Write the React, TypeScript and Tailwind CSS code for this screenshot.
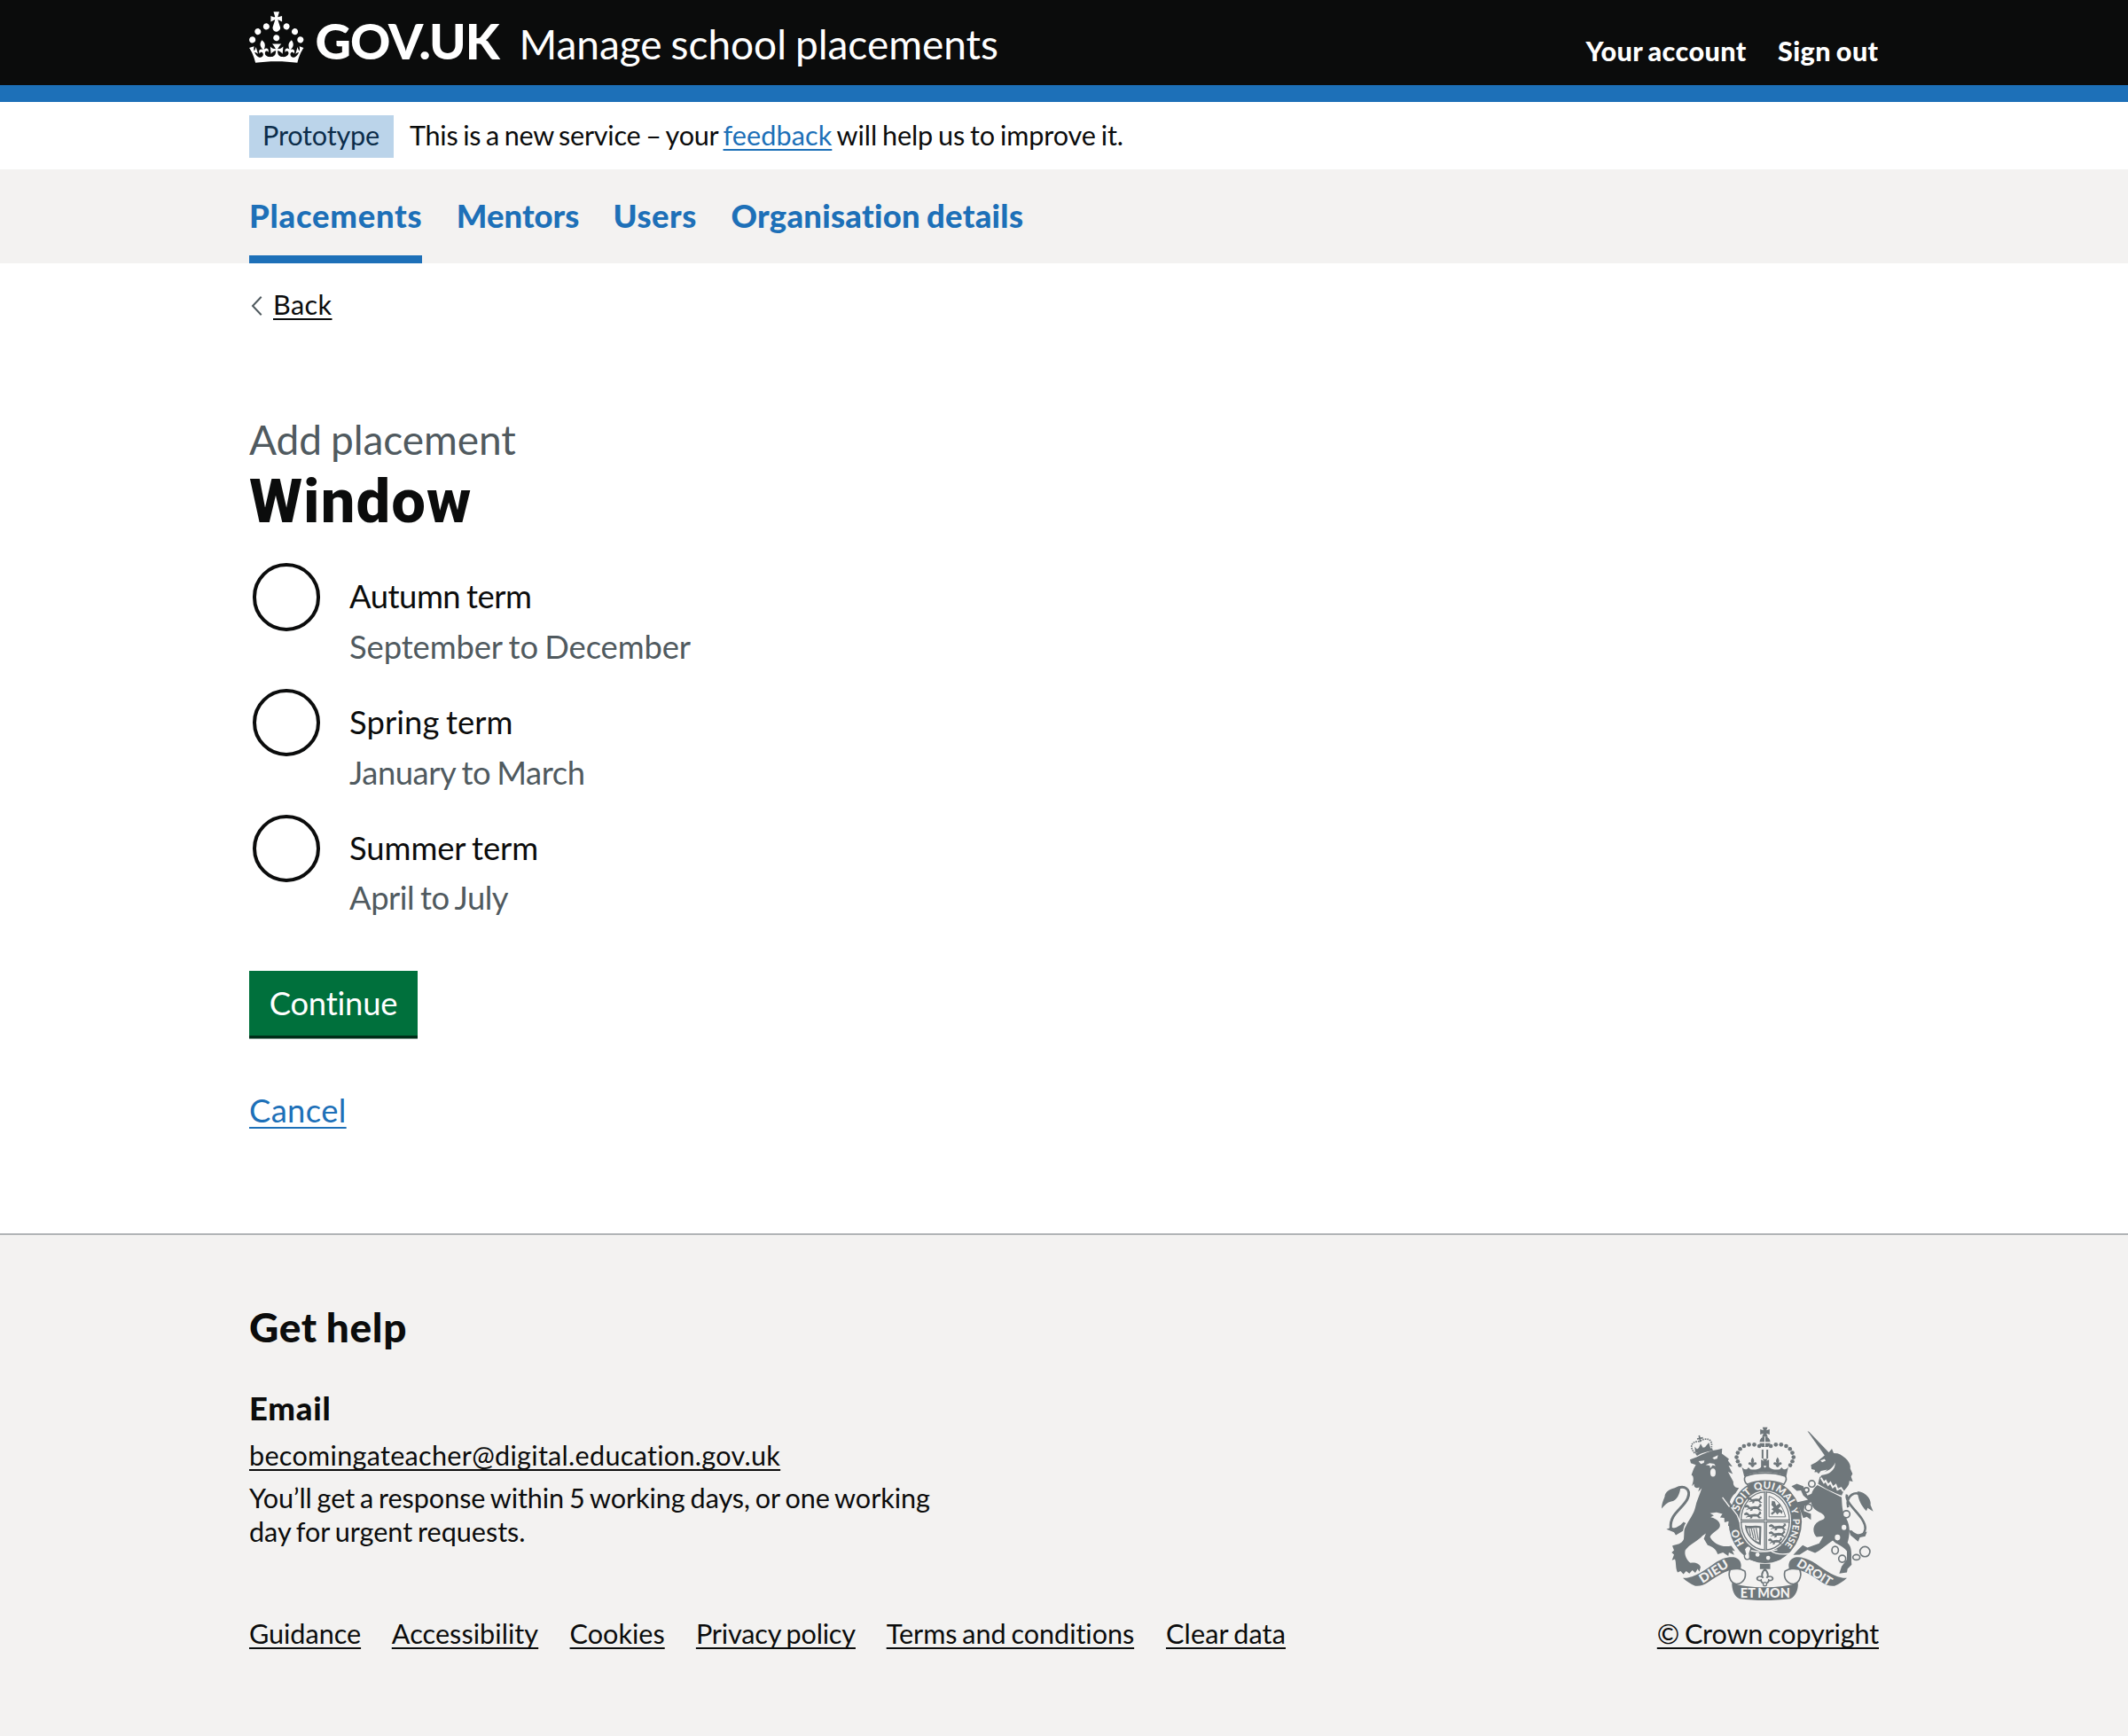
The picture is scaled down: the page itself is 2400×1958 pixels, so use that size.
import React from "react";

function Crown() {
  return (
    <svg viewBox="0 0 32 30" className="h-[58px] w-[61.5px] shrink-0" fill="currentColor" aria-hidden="true">
      <path d="M22.6 10.4c-1 .4-2-.1-2.4-1-.4-.9.1-2 1-2.4.9-.4 2 .1 2.4 1s-.1 2-1 2.4m-5.9 6.7c-.9.4-2-.1-2.4-1-.4-.9.1-2 1-2.4.9-.4 2 .1 2.4 1s-.1 2-1 2.4m10.8-3.7c-1 .4-2-.1-2.4-1-.4-.9.1-2 1-2.4.9-.4 2 .1 2.4 1s0 2-1 2.4m3.3 4.8c-1 .4-2-.1-2.4-1-.4-.9.1-2 1-2.4.9-.4 2 .1 2.4 1s-.1 2-1 2.4M17 4.7l2.3 1.2V2.5l-2.3.7-.2-.2.9-3h-3.4l.9 3-.2.2c-.1.1-2.3-.7-2.3-.7v3.4L15 4.7c.1.1.1.2.2.2l-1.3 4c-.1.2-.1.4-.1.6 0 1.1.8 2 1.9 2.2h.7c1-.2 1.9-1.1 1.9-2.1 0-.2 0-.4-.1-.6l-1.3-4c-.1-.2 0-.2.1-.3m-7.6 5.7c.9.4 2-.1 2.4-1 .4-.9-.1-2-1-2.4-.9-.4-2 .1-2.4 1s0 2 1 2.4m-5 3c.9.4 2-.1 2.4-1 .4-.9-.1-2-1-2.4-.9-.4-2 .1-2.4 1s.1 2 1 2.4m-3.2 4.8c.9.4 2-.1 2.4-1 .4-.9-.1-2-1-2.4-.9-.4-2 .1-2.4 1s0 2 1 2.4m14.8 11c4.4 0 8.6.3 12.3.8 1.1-4.5 2.4-7 3.7-8.8l-2.5-.9c.2 1.3.3 1.9 0 2.7-.4-.4-.8-1.1-1.1-2.3l-1.2 4c.7-.5 1.3-.8 2-.9-1.1 2.5-2.6 3.1-3.5 3-1.1-.2-1.7-1.2-1.5-2.1.3-1.2 1.5-1.5 2.1-.1 1.1-2.3-.8-3-2-2.3 1.9-1.9 2.1-3.5.6-5.6-2.1 1.6-2.1 3.2-1.2 5.5-1.2-1.4-3.2-.6-2.5 1.6.9-1.4 2.1-.5 1.9.8-.2 1.1-1.7 2.1-3.5 1.9-2.7-.2-2.9-2.1-2.9-3.6.7-.1 1.9.5 2.9 1.9l.4-4.3c-1.1 1.1-2.1 1.4-3.2 1.4.4-1.2 2.1-3 2.1-3h-5.4s1.7 1.9 2.1 3c-1.1 0-2.1-.2-3.2-1.4l.4 4.3c1-1.4 2.2-2 2.9-1.9-.1 1.5-.2 3.4-2.9 3.6-1.9.2-3.4-.8-3.5-1.9-.2-1.3 1-2.2 1.9-.8.7-2.3-1.2-3-2.5-1.6.9-2.2.9-3.9-1.2-5.5-1.5 2-1.3 3.7.6 5.6-1.2-.7-3.1 0-2 2.3.6-1.4 1.8-1.1 2.1.1.2.9-.3 1.9-1.5 2.1-.9.2-2.4-.5-3.5-3 .6 0 1.2.3 2 .9l-1.2-4c-.3 1.1-.7 1.9-1.1 2.3-.3-.8-.2-1.4 0-2.7l-2.9.9C1.3 23 2.6 25.5 3.7 30c3.7-.5 7.9-.8 12.3-.8" />
    </svg>
  );
}

const INK = "#6f777b";
const PAPER = "#f3f2f1";

const archPearls = [
  [403, 122],
  [386, 117],
  [368, 117],
  [351, 122],
  [338, 132],
  [330, 145],
  [326, 160],
  [330, 174],
  [337, 187],
];

/* A lion passant, about 66 units wide. */
const passant =
  "M2 6l8-4 6 3 4 4 16-2 10 1 6-6-4-2 8 0 2 6-8 6 4 4 6 3-10 1-6-5-14 0-2 5-8 1 3-5-9 0-6 3 2-4 6-2-6-3-6 1z";

/* A fleur-de-lis, centred on x = 0, standing on y = 0. */
const fleur = "M0-34c6 8 7 14 3 20 4-5 10-4 11 1 0 4-4 6-7 4 0 4-3 7-7 9-4-2-7-5-7-9-3 2-7 0-7-4 1-5 7-6 11-1-4-6-3-12 3-20z";

function RoyalArms() {
  return (
    <svg viewBox="70 56 722 592" className="h-[197px] w-[241px]" fill={INK} aria-hidden="true">
      {/* lion */}
      <path d="M168 168L190 160C215 146 240 137 262 134L277 130L276 148L292 160L300 166L297 172L312 192L299 188L313 217L297 209L315 243C314 256 320 264 334 264L322 282C312 290 306 300 303 312L326 345Q340 364 333 398L322 388L318 402L309 388L297 393L301 376L285 380L290 366L270 364L278 352L258 347L236 350L249 357L238 363C262 368 275 385 268 398C258 412 240 418 236 430C245 450 275 468 308 460L321 478L311 475L318 491L300 483L298 495L280 483L262 489C255 467 240 462 228 458L215 436L222 418L210 426C200 440 165 455 152 475C148 492 158 510 170 518C185 515 200 520 204 532L200 548L194 538L186 552L176 543L166 554L155 546L146 556L136 546L126 550C118 535 122 515 117 505L107 509L114 490L106 483L114 475L108 460C125 455 140 455 147 438C149 420 147 405 152 398C165 370 180 355 186 330C190 310 200 290 208 265L196 277L200 262C186 268 180 260 182 250L174 258C181 240 182 225 173 220L181 198L188 186L171 180Z" />
      <g fill={PAPER}>
        <path d="M197 173l20-2-2 8-10 4zM244 162l19-9-3 12-10 2zM221 186l14-6 15 2 5 8-10-3-8 10-2-9z" />
        <ellipse cx="246" cy="212" rx="9" ry="14" />
      </g>
      <g fill="none" stroke={INK}>
        <path d="M118 268C150 252 173 268 160 300C145 334 98 352 103 400" strokeWidth="9" />
        <path d="M98 400C112 410 134 402 150 382" strokeWidth="9" />
      </g>
      <path d="M72 334C72 310 84 296 83 288C88 274 108 262 136 262C134 284 124 308 104 310C92 312 82 322 72 334ZM88 404L106 398C122 408 136 396 152 380L144 410L120 424L114 414Z" />
      {/* lion's crown */}
      <path d="M186 148C202 138 222 130 243 129L246 138C226 140 206 146 192 155Z" />
      <g fill="none" stroke={INK} strokeWidth="5">
        <path d="M184 146C165 124 172 106 200 106C222 92 246 96 241 126" strokeDasharray="5 3" />
        <path d="M199 86L204 108M192 98L212 94" />
      </g>
      <path d="M186 146L184 124L192 133L198 128L204 114L212 127L219 126L232 110L238 130Z" />

      {/* unicorn */}
      <path d="M566 71L572 74L641 146L626 156Z" />
      <path d="M578 186C600 178 614 160 630 150L640 142L649 131L655 146L668 147C694 156 716 182 711 198L719 216L714 226L720 242L708 240C708 258 698 262 692 272L672 262C650 262 622 244 610 226L620 214L634 202L612 206L604 216L598 210L590 211L592 203L580 200Z" />
      <path d="M610 171l14-5 4 6-12 5zM606 212C634 212 654 196 660 178C662 206 634 222 612 220Z" fill={PAPER} />
      <path d="M608 226C630 246 662 260 692 268L682 290C654 280 622 264 602 250Z" />
      <path d="M612 230L622 246L628 240L636 254L644 246L652 262L662 254L668 270L680 264L688 276" fill="none" stroke={PAPER} strokeWidth="6" />
      <path d="M600 254L682 296C684 320 682 345 698 368C714 396 708 430 702 450C722 470 712 496 716 524L702 538L700 550L674 554L682 530L700 506L700 478C684 458 664 456 652 442C636 452 610 476 592 484L566 474L540 490L518 491L534 474L550 458L566 466L606 452L620 428L597 430C580 412 584 384 612 374C636 366 620 352 606 346C592 338 582 330 578 312L556 326L554 342L578 352L578 372L564 362L552 366L538 330L526 314L568 304L552 290L544 272L530 274L512 258L530 250L552 258L566 290L580 284C584 270 592 260 600 254Z" />
      <path d="M700 286C690 320 764 360 762 402C758 434 732 430 712 410M704 330C694 290 730 268 756 294" fill="none" stroke={INK} strokeWidth="8" />
      <path d="M735 276C760 276 784 300 780 322L789 344L770 332L766 342C746 322 738 300 735 276ZM706 404L730 424L768 412L762 428L744 432L738 446L712 424Z" />
      <g fill={PAPER}>
        <ellipse cx="690" cy="398" rx="8" ry="9" />
        <ellipse cx="668" cy="432" rx="9" ry="10" />
      </g>
      <g fill={PAPER} stroke={INK} strokeWidth="5">
        <circle cx="581" cy="250" r="11" />
        <circle cx="563" cy="271" r="8" />
        <circle cx="570" cy="330" r="11" />
        <circle cx="698" cy="353" r="12" />
        <ellipse cx="660" cy="475" rx="11" ry="13" />
        <circle cx="684" cy="504" r="12" />
        <ellipse cx="732" cy="499" rx="12" ry="9" />
        <circle cx="761" cy="480" r="17" />
      </g>

      {/* crown */}
      <path d="M414 58h17l-4 11 11-4v18l-11-4 5 12h-20l5-12-11 4V65l11 4z" />
      <path d="M404 108a18 18 0 0 1 36 0z" />
      <path d="M403 112h38l-8 13h-22zM411 134h6v30h-6zM427 134h6v30h-6z" />
      <path d="M422 90v34" stroke={PAPER} strokeWidth="3" />
      {archPearls.map(([x, y]) => (
        <React.Fragment key={x + "-" + y}>
          <circle cx={x} cy={y} r="7" />
          <circle cx={845 - x} cy={y} r="7" />
        </React.Fragment>
      ))}
      <path d="M343 190C348 204 362 204 366 194L373 201C392 204 410 200 412 186L422 196L433 186C436 200 452 204 472 201L479 194C484 204 497 204 502 190L494 226C465 206 380 206 352 226Z" />
      <path d={fleur} transform="translate(380 194)" />
      <path d={fleur} transform="translate(465 194)" />
      <path d="M409 168l13 7 14-7v26l-14-6-13 6z" />
      <path d="M414 166h17l-8 14z" />

      {/* garter */}
      <ellipse cx="423" cy="378" rx="124" ry="141" />
      <ellipse cx="423" cy="376" rx="88" ry="104" fill={PAPER} />
      <ellipse cx="423" cy="376" rx="82" ry="98" fill="none" stroke={INK} strokeWidth="4" />
      <path d="M424 276V474M340 376H506" stroke={INK} strokeWidth="10" />
      <path d="M424 276V474M340 376H506" stroke={PAPER} strokeWidth="2" />
      {[292, 318, 344].map((y, i) => (
        <path key={y} d={passant} transform={`translate(${[360, 350, 349][i]} ${y}) scale(${[0.9, 1.05, 1.05][i]} 1.15)`} />
      ))}
      {[384, 408, 432].map((y, i) => (
        <path key={y} d={passant} transform={`translate(${[433, 433, 431][i]} ${y}) scale(${[1.05, 1.0, 0.85][i]} 1.15)`} />
      ))}
      <path d="M436 292C460 300 482 322 492 362H436Z" fill="none" stroke={INK} strokeWidth="3" />
      <path d="M446 308l10 2 4 14 12-8 4 10-8 8 14 8-2 10-8-6-8 8-6-8-12 10-4-6 10-8-8-6 8-6-8-8z" />
      <path d="M354 390C370 396 388 388 410 394L408 458C384 450 356 424 354 390Z" />
      <path d="M362 400C364 424 384 442 402 448L403 400C388 398 376 404 362 400Z" fill={PAPER} />
      <path d="M368 402L374 426M376 402L384 436M384 402L392 442M392 400L400 440" stroke={INK} strokeWidth="3.5" />
      {/* strap and buckle */}
      <path d="M346 462C372 486 410 486 440 478C462 470 484 462 500 474L476 506C440 520 396 520 358 502Z" />
      <path d="M372 476C410 486 440 478 464 474M440 476C462 492 486 490 506 486" fill="none" stroke={PAPER} strokeWidth="4" />
      <path d="M354 470C364 452 380 464 372 478C364 492 378 500 366 506C352 508 348 492 358 486" fill={PAPER} stroke={INK} strokeWidth="4" />
      <g fill={PAPER}>
        <circle cx="397" cy="490" r="7" />
        <circle cx="433" cy="501" r="7" />
      </g>
      {/* foreleg over the garter */}
      <path d="M280 300L300 318L322 350Q336 368 333 398L322 388L318 402L309 388L297 393L301 376L285 380Z" />
      <path d="M278 296L302 328M308 330L328 356L337 380" fill="none" stroke={PAPER} strokeWidth="4" />
      <path d="M356 224C395 210 450 210 491 224C498 232 492 244 486 252C450 236 396 236 362 252C352 244 350 232 356 224Z" fill={PAPER} stroke={INK} strokeWidth="5" />
      <path id="garter-line" d="M423 489A94 111 0 0 1 423 267A94 111 0 0 1 423 489" fill="none" />
      <g fill={PAPER} fontFamily="Lato, sans-serif" fontWeight="900" fontSize="35" textAnchor="middle">
        <text><textPath href="#garter-line" startOffset="17%">HO</textPath></text>
        <text><textPath href="#garter-line" startOffset="36.5%">SOIT</textPath></text>
        <text><textPath href="#garter-line" startOffset="49.5%">QUI</textPath></text>
        <text><textPath href="#garter-line" startOffset="61%">MAL</textPath></text>
        <text fontSize="30"><textPath href="#garter-line" startOffset="69.7%">Y</textPath></text>
        <text fontSize="31"><textPath href="#garter-line" startOffset="81%">PENSE</textPath></text>
      </g>

      {/* motto ribbon */}
      <path d="M144 569C180 572 216 544 248 522C276 502 300 496 322 500C340 506 346 526 338 542C300 534 262 562 232 582C214 594 200 598 186 596C170 590 156 580 144 569Z" />
      <path d="M700 569C664 572 628 544 596 522C568 502 544 496 522 500C504 506 498 526 506 542C544 534 582 562 612 582C630 594 644 598 658 596C674 590 688 580 700 569Z" />
      <path d="M310 586C360 606 480 606 534 586C536 610 524 634 508 640C450 647 390 647 336 640C318 632 310 610 310 586Z" />
      <g fill="none" stroke={INK} strokeWidth="5">
        <path d="M306 538C296 552 300 586 326 590C350 588 360 566 354 546L338 538" />
        <path d="M538 538C548 552 544 586 518 590C494 588 484 566 490 546L506 538" />
      </g>
      <g fill={PAPER} fontFamily="Lato, sans-serif" fontWeight="900" textAnchor="middle">
        <text x="423" y="636" fontSize="45" textLength="168" lengthAdjust="spacingAndGlyphs">ET MON</text>
        <text transform="translate(256 559) rotate(-32)" fontSize="42" textLength="108" lengthAdjust="spacingAndGlyphs">DIEU</text>
        <text transform="translate(583 562) rotate(32)" fontSize="41" textLength="132" lengthAdjust="spacingAndGlyphs">DROIT</text>
      </g>
      {/* pendant */}
      <path d="M405 521h35v18h-35z" />
      <path d={fleur} transform="translate(422 590) scale(1.9 1.5)" fill={PAPER} stroke={INK} strokeWidth="3" />
      <circle cx="422" cy="590" r="6" fill={PAPER} stroke={INK} strokeWidth="4" />
    </svg>
  );
}

const LINK = "underline [text-decoration-skip-ink:none] decoration-2 underline-offset-[4px]";

const nav = [
  { label: "Placements", cls: "w-[195px] tracking-[0.75px] border-[#1d70b8]" },
  { label: "Mentors", cls: "w-[138px] tracking-[0.05px] border-transparent" },
  { label: "Users", cls: "w-[94px] tracking-[0.47px] border-transparent" },
  { label: "Organisation details", cls: "w-[330px] tracking-[0.28px] border-transparent" },
];

const terms = [
  { label: "Autumn term", cls: "tracking-[-0.5px]", hint: "September to December", hintCls: "tracking-[-0.12px]" },
  { label: "Spring term", cls: "tracking-[0.06px]", hint: "January to March", hintCls: "tracking-[-0.45px]" },
  { label: "Summer term", cls: "tracking-[-0.1px]", hint: "April to July", hintCls: "tracking-[-0.5px]" },
];

const footerLinks = [
  { label: "Guidance", cls: "w-[125.5px] tracking-[-0.04px]" },
  { label: "Accessibility", cls: "w-[165.5px] tracking-[0.05px]" },
  { label: "Cookies", cls: "w-[107px]" },
  { label: "Privacy policy", cls: "w-[179.5px] tracking-[-0.16px]" },
  { label: "Terms and conditions", cls: "w-[280px] tracking-[-0.06px]" },
  { label: "Clear data", cls: "w-[136px] tracking-[0.12px]" },
];

const WRAP = "mx-auto w-[1838px]";

export default function App() {
  return (
    <div className="flex h-[1958px] flex-col bg-white font-['Lato',sans-serif] text-[30.6px] leading-[38px] whitespace-nowrap text-[#0b0c0c] [word-spacing:-0.06em]">
      <header className="h-[115px] shrink-0 border-b-[19px] border-[#1d70b8] bg-[#0b0c0c] text-white">
        <div className={`${WRAP} flex items-start`}>
          <div className="pt-[13px]">
            <Crown />
          </div>
          <span className="mt-[10px] ml-[13px] w-[230px] text-[56px] leading-[71px] font-black tracking-[-1px]">GOV.UK</span>
          <span className="mt-[21px] text-[46px] leading-[58px] tracking-[-0.02px]">Manage school placements</span>
          <nav className="mt-[39px] ml-auto flex gap-[34.5px] font-black">
            <a className="w-[182px] tracking-[0.4px]">Your account</a>
            <a className="w-[114px] tracking-[0.4px]">Sign out</a>
          </nav>
        </div>
      </header>

      <div className={`${WRAP} flex h-[76px] shrink-0 items-start pt-[15px]`}>
        <strong className="h-[48px] w-[162.5px] bg-[#bbd4ea] pl-[15px] leading-[46px] font-normal tracking-[-0.18px] text-[#0c2d4a]">Prototype</strong>
        <p className="ml-[18.5px] leading-[46px]">
          <span className="tracking-[-0.26px]">This is a new service – your </span>
          <a className={`${LINK} tracking-[0.08px] text-[#1d70b8]`}>feedback</a>
          <span className="tracking-[-0.1px]"> will help us to improve it.</span>
        </p>
      </div>

      <div className="h-[105.5px] shrink-0 bg-[#f3f2f1]">
        <nav className={`${WRAP} flex h-full gap-[38.8px] text-[36.4px] leading-[48px] font-black text-[#1d70b8]`}>
          {nav.map((n) => (
            <a key={n.label} className={`${n.cls} border-b-[9.5px] pt-[28px]`}>
              {n.label}
            </a>
          ))}
        </nav>
      </div>

      <main className={`${WRAP} h-[1094.5px] shrink-0`}>
        <div className="flex items-start gap-[11px] pt-[28.5px]">
          <svg viewBox="0 0 16 24" className="mt-[8px] h-[24px] w-[16px]" fill="none" stroke="#505a5f" strokeWidth="2">
            <path d="M13.7 1.7L4 12L13.7 22.3" />
          </svg>
          <a className={`${LINK} tracking-[0.4px]`}>Back</a>
        </div>
        <h1 className="mt-[103px] font-['Roboto',sans-serif] text-[68.9px] leading-[72px] font-extrabold tracking-[1px]">
          <span className="mb-[4px] block font-['Lato',sans-serif] text-[46px] leading-[60px] font-normal tracking-[-0.05px] text-[#505a5f]">Add placement</span>
          Window
        </h1>
        <div className="mt-[33px] text-[36.4px] leading-[48px]">
          {terms.map((t) => (
            <div key={t.label} className="flex h-[141.8px] items-start">
              <span className="ml-[3.5px] h-[76.6px] w-[76.6px] rounded-full border-4 border-[#0b0c0c]" />
              <div className="ml-[33px] pt-[13.3px]">
                <div className={t.cls}>{t.label}</div>
                <div className={`mt-[8.5px] text-[#505a5f] ${t.hintCls}`}>{t.hint}</div>
              </div>
            </div>
          ))}
        </div>
        <button className="mt-[34.5px] block h-[73px] w-[190px] bg-[#00703c] text-center text-[36.4px] leading-[72px] tracking-[-0.2px] text-white shadow-[0_3.5px_0_#002d18]">
          Continue
        </button>
        <a className="mt-[60px] inline-block text-[36.4px] leading-[48px] tracking-[0.35px] text-[#1d70b8] underline decoration-2 underline-offset-[5px]">
          Cancel
        </a>
      </main>

      <footer className="grow border-t-2 border-[#b1b4b6] bg-[#f3f2f1]">
        <div className={`${WRAP} flex items-end justify-between pt-[75px]`}>
          <div>
            <h2 className="text-[46px] leading-[57px] font-black tracking-[0.7px]">Get help</h2>
            <h3 className="mt-[39px] text-[36.4px] leading-[48px] font-black tracking-[0.8px]">Email</h3>
            <a className={`${LINK} mt-[11px] block tracking-[0.28px]`}>becomingateacher@digital.education.gov.uk</a>
            <p className="mt-[9.5px] leading-[38.4px]">
              <span className="tracking-[-0.07px]">You’ll get a response within 5 working days, or one working</span>
              <br />
              <span className="tracking-[-0.03px]">day for urgent requests.</span>
            </p>
            <ul className="mt-[76.5px] flex gap-[35.3px]">
              {footerLinks.map((l) => (
                <li key={l.label} className={l.cls}>
                  <a className={LINK}>{l.label}</a>
                </li>
              ))}
            </ul>
          </div>
          <div className="flex flex-col items-center">
            <RoyalArms />
            <a className={`${LINK} mt-[18px] tracking-[-0.16px]`}>© Crown copyright</a>
          </div>
        </div>
      </footer>
    </div>
  );
}
